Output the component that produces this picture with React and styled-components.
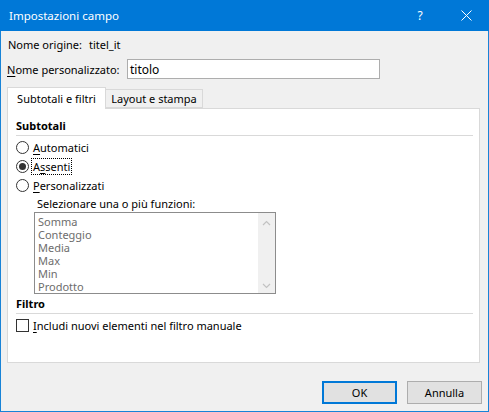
import React from 'react'
import styled, { createGlobalStyle } from 'styled-components'

const GlobalStyle = createGlobalStyle`
  html, body {
    margin: 0;
    padding: 0;
    background: #f0f0f0;
  }
  body {
    font-family: "Noto Sans", "Open Sans", sans-serif;
    font-size: 11px;
    color: #000;
    white-space: nowrap;
  }
`

const Window = styled.div`
  width: 489px;
  height: 412px;
  box-sizing: border-box;
  border: 1px solid #1883d7;
  border-top: none;
  background: #f0f0f0;
  display: flex;
  flex-direction: column;
`

const TitleBar = styled.div`
  height: 31px;
  margin: 0 -1px;
  background: #0078d7;
  color: #fff;
  display: flex;
  align-items: center;
  padding-left: 9px;
  font-size: 11.5px;
`

const Title = styled.div`
  flex: 1;
  margin-top: -1px;
`

const TitleButton = styled.div`
  width: 46px;
  height: 31px;
  display: flex;
  align-items: center;
  justify-content: center;
  font-size: 12px;
`

const Body = styled.div`
  flex: 1;
  display: flex;
  flex-direction: column;
  padding: 0 6px 0 6px;
`

const Row = styled.div`
  display: flex;
  align-items: center;
  height: ${p => p.$h || 16}px;
  margin-top: ${p => p.$mt || 0}px;
  padding-left: ${p => p.$pl || 0}px;
`

const Label = styled.span`
  width: ${p => p.$w}px;
  flex-shrink: 0;
`

const Ul = styled.span`
  text-decoration: underline;
  text-underline-offset: 2px;
`

const TextInput = styled.div`
  width: 253px;
  height: 20px;
  box-sizing: border-box;
  border: 1px solid #adadad;
  background: #fff;
  padding-left: 2px;
  display: flex;
  align-items: center;
  font-size: 12px;
`

const TabStrip = styled.div`
  display: flex;
  align-items: flex-end;
  height: 21px;
  margin-top: 8px;
  position: relative;
  z-index: 1;
`

const Tab = styled.div`
  box-sizing: border-box;
  height: ${p => (p.$active ? 22 : 19)}px;
  margin-bottom: ${p => (p.$active ? -1 : 0)}px;
  width: ${p => p.$w}px;
  background: ${p => (p.$active ? '#fff' : '#f0f0f0')};
  border: 1px solid #d9d9d9;
  border-bottom: ${p => (p.$active ? 'none' : '1px solid #d9d9d9')};
  border-left: ${p => (p.$first ? '1px solid #d9d9d9' : 'none')};
  display: flex;
  align-items: center;
  justify-content: center;
  padding-bottom: ${p => (p.$active ? 1 : 0)}px;
`

const Panel = styled.div`
  width: 473px;
  height: 255px;
  box-sizing: border-box;
  border: 1px solid #d9d9d9;
  background: #fff;
  padding: 0 6px 0 8px;
  display: flex;
  flex-direction: column;
`

const Heading = styled.div`
  font-weight: 700;
  height: 16px;
  line-height: 16px;
  margin-top: ${p => p.$mt}px;
`

const Separator = styled.div`
  height: 1px;
  background: #d9d9d9;
  margin-top: 1px;
`

const Option = styled.div`
  display: flex;
  align-items: center;
  height: 19px;
  margin-top: ${p => p.$mt || 0}px;
`

const Radio = styled.span`
  width: 13px;
  height: 13px;
  box-sizing: border-box;
  border: 1px solid #333;
  border-radius: 50%;
  margin-right: 4px;
  display: flex;
  align-items: center;
  justify-content: center;
  &::after {
    content: '';
    display: ${p => (p.$checked ? 'block' : 'none')};
    width: 7px;
    height: 7px;
    border-radius: 50%;
    background: #333;
  }
`

const Check = styled.span`
  width: 13px;
  height: 13px;
  box-sizing: border-box;
  border: 1px solid #333;
  margin-right: 4px;
`

const Focus = styled.span`
  outline: 1px dotted #000;
  outline-offset: 0;
  padding: 0 1px;
  margin-left: -1px;
  line-height: 15px;
`

const Hint = styled.div`
  height: 16px;
  line-height: 16px;
  margin-top: 1px;
  padding-left: 21px;
`

const ListBox = styled.div`
  margin-left: 18px;
  width: 242px;
  height: 82px;
  box-sizing: border-box;
  border: 1px solid #8c8c8c;
  display: flex;
`

const Items = styled.div`
  flex: 1;
  padding: 2px 0 0 3px;
  color: #6d6d6d;
  font-size: 11px;
`

const Item = styled.div`
  height: 13px;
  line-height: 13px;
`

const ScrollTrack = styled.div`
  width: 17px;
  background: #f0f0f0;
  display: flex;
  flex-direction: column;
  justify-content: space-between;
  align-items: center;
  padding: 7px 0 4px;
  box-sizing: border-box;
`

const Footer = styled.div`
  display: flex;
  justify-content: flex-end;
  gap: 10px;
  margin-top: 18px;
`

const Button = styled.div`
  width: 75px;
  height: 23px;
  box-sizing: border-box;
  background: #e1e1e1;
  border: ${p => (p.$primary ? '2px solid #0078d7' : '1px solid #adadad')};
  display: flex;
  align-items: center;
  justify-content: center;
`

const Chevron = ({ down }) => (
  <svg width="9" height="6" viewBox="0 0 9 6">
    <path
      d={down ? 'M1 1 L4.5 4.5 L8 1' : 'M1 5 L4.5 1.5 L8 5'}
      fill="none"
      stroke="#c2c2c2"
      strokeWidth="1.2"
    />
  </svg>
)

const CloseIcon = () => (
  <svg width="11" height="11" viewBox="0 0 11 11">
    <path d="M0.5 0.5 L10.5 10.5 M10.5 0.5 L0.5 10.5" stroke="#fff" strokeWidth="1" />
  </svg>
)

const functions = ['Somma', 'Conteggio', 'Media', 'Max', 'Min', 'Prodotto']

const App = () => (
  <>
    <GlobalStyle />
    <Window>
      <TitleBar>
        <Title>Impostazioni campo</Title>
        <TitleButton>?</TitleButton>
        <TitleButton>
          <CloseIcon />
        </TitleButton>
      </TitleBar>
      <Body>
        <Row $mt={5} $pl={1}>
          <Label $w={81}>Nome origine:</Label>
          <span>titel_it</span>
        </Row>
        <Row $h={20} $mt={7}>
          <Label $w={120}>
            <Ul>N</Ul>ome personalizzato:
          </Label>
          <TextInput>titolo</TextInput>
        </Row>
        <TabStrip>
          <Tab $active $first $w={99}>Subtotali e filtri</Tab>
          <Tab $w={97}>Layout e stampa</Tab>
        </TabStrip>
        <Panel>
          <Heading $mt={9}>Subtotali</Heading>
          <Separator />
          <Option $mt={2}>
            <Radio />
            <span><Ul>A</Ul>utomatici</span>
          </Option>
          <Option>
            <Radio $checked />
            <Focus>A<Ul>s</Ul>senti</Focus>
          </Option>
          <Option>
            <Radio />
            <span><Ul>P</Ul>ersonalizzati</span>
          </Option>
          <Hint>Selezionare una o più funzioni:</Hint>
          <ListBox>
            <Items>
              {functions.map(f => (
                <Item key={f}>{f}</Item>
              ))}
            </Items>
            <ScrollTrack>
              <Chevron />
              <Chevron down />
            </ScrollTrack>
          </ListBox>
          <Heading $mt={2}>Filtro</Heading>
          <Separator />
          <Option $mt={2}>
            <Check />
            <span><Ul>I</Ul>ncludi nuovi elementi nel filtro manuale</span>
          </Option>
        </Panel>
        <Footer>
          <Button $primary>OK</Button>
          <Button>Annulla</Button>
        </Footer>
      </Body>
    </Window>
  </>
)

export default App
